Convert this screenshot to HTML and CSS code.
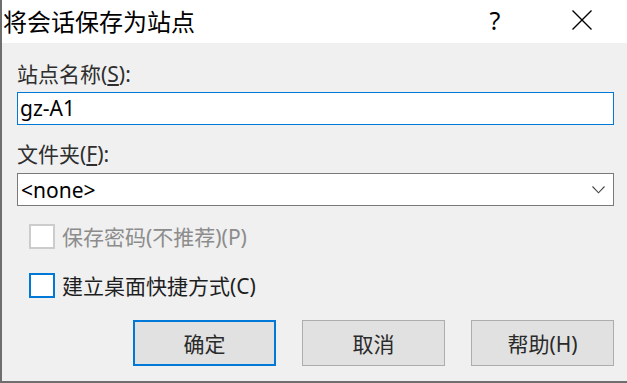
FILE: index.html
```html
<!DOCTYPE html>
<html lang="zh-CN">
<head>
<meta charset="utf-8">
<title>将会话保存为站点</title>
<link rel="stylesheet" href="styles.css">
</head>
<body>
<div class="window">
  <div class="titlebar">
    <div class="title">将会话保存为站点</div>
    <div class="help">?</div>
    <div class="close">
      <svg width="20" height="20" viewBox="0 0 20 20"><path d="M0.5 0.5 L19.5 19.5 M19.5 0.5 L0.5 19.5" stroke="#000" stroke-width="1.4" fill="none"/></svg>
    </div>
  </div>
  <div class="content">
    <div class="label label-first">站点名称(<u>S</u>):</div>
    <div class="textbox">gz-A1</div>
    <div class="label label-second">文件夹(<u>F</u>):</div>
    <div class="combo">
      <span class="combo-text">&lt;none&gt;</span>
      <svg class="chevron" width="13" height="8" viewBox="0 0 13 8"><path d="M0.5 0.5 L6.5 6.8 L12.5 0.5" stroke="#444" stroke-width="1.1" fill="none"/></svg>
    </div>
    <div class="check-row check-disabled">
      <span class="box"></span>
      <span class="check-text">保存密码(不推荐)(P)</span>
    </div>
    <div class="check-row check-enabled">
      <span class="box"></span>
      <span class="check-text">建立桌面快捷方式(C)</span>
    </div>
    <div class="buttons">
      <div class="btn btn-default">确定</div>
      <div class="btn">取消</div>
      <div class="btn">帮助(H)</div>
    </div>
  </div>
</div>
</body>
</html>
```

FILE: styles.css
```css
html, body {
  margin: 0;
  padding: 0;
}
body {
  width: 627px;
  height: 383px;
  overflow: hidden;
  font-family: "Noto Sans", "Noto Sans CJK SC", sans-serif;
}
.window {
  box-sizing: border-box;
  width: 627px;
  height: 383px;
  border-left: 2px solid #6e6e6e;
  border-bottom: 2px solid #6e6e6e;
  background: #f0f0f0;
  display: flex;
  flex-direction: column;
}
.titlebar {
  height: 43px;
  background: #ffffff;
  display: flex;
  align-items: center;
  flex-shrink: 0;
}
.title {
  font-family: "Noto Sans CJK SC", sans-serif;
  font-size: 24px;
  color: #000;
  padding-left: 1px;
  line-height: 30px;
  margin-top: -2px;
  flex: 1;
}
.help {
  width: 30px;
  text-align: center;
  font-family: "Noto Sans", sans-serif;
  font-size: 25px;
  line-height: 30px;
  color: #000;
  margin-right: 62px;
  margin-top: -4px;
}
.close {
  width: 20px;
  height: 20px;
  margin-right: 35px;
  margin-top: -3px;
  display: flex;
}
.content {
  padding: 17px 13px 0 15px;
  display: flex;
  flex-direction: column;
}
.label {
  font-size: 21px;
  line-height: 28px;
  height: 28px;
  color: #2e2e2e;
}
.label u {
  text-underline-offset: 2px;
}
.label-second {
  margin-top: 15px;
}
.textbox {
  box-sizing: border-box;
  margin-top: 4px;
  height: 33px;
  border: 1px solid #0078d7;
  background: #fff;
  font-size: 21px;
  line-height: 30px;
  padding-left: 2px;
  color: #000;
}
.combo {
  box-sizing: border-box;
  margin-top: 5px;
  height: 33px;
  border: 1px solid #7a7a7a;
  background: #fff;
  display: flex;
  align-items: center;
  padding-left: 3px;
  padding-right: 8px;
}
.combo-text {
  flex: 1;
  font-size: 21px;
  line-height: 30px;
  color: #000;
}
.chevron {
  margin-top: 1px;
}
.check-row {
  display: flex;
  align-items: center;
  height: 25px;
  padding-left: 12px;
}
.check-disabled {
  margin-top: 18px;
}
.check-enabled {
  margin-top: 24px;
}
.box {
  box-sizing: border-box;
  width: 26px;
  height: 25px;
  background: #fff;
  border: 2px solid #cccccc;
  flex-shrink: 0;
}
.check-enabled .box {
  border-color: #0078d7;
}
.check-text {
  margin-left: 7px;
  font-size: 21px;
  line-height: 28px;
  color: #1e1e1e;
}
.check-disabled .check-text {
  color: #8c8c8c;
}
.buttons {
  margin-top: 22px;
  display: flex;
  justify-content: flex-end;
  gap: 26px;
}
.btn {
  box-sizing: border-box;
  width: 143px;
  height: 46px;
  background: #e1e1e1;
  border: 1px solid #adadad;
  display: flex;
  align-items: center;
  justify-content: center;
  font-size: 21px;
  color: #2a2a2a;
}
.btn-default {
  border: 2px solid #0078d7;
}
```
